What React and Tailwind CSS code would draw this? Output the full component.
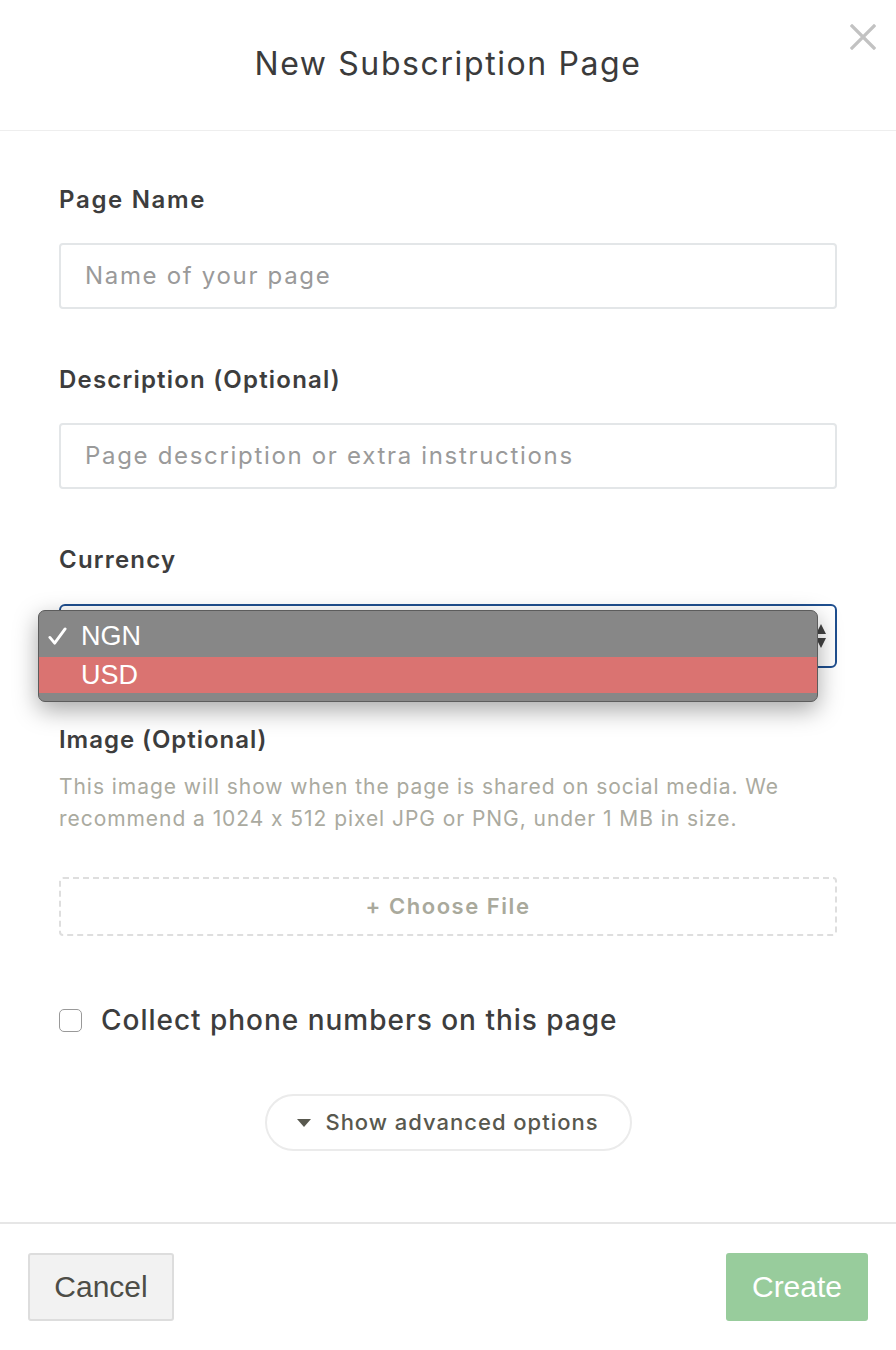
import React from "react";

export default function App() {
  const font = { fontFamily: "Inter, 'Noto Sans', sans-serif" };
  return (
    <div className="w-[896px] h-[1350px] bg-white flex flex-col text-[#3d3d3d]" style={font}>
      <div className="h-[131px] border-b border-[#eeeeee] flex items-center justify-center relative shrink-0">
        <h1 className="text-[32px] font-normal tracking-[0.05em] text-[#3b3b3b] -mt-[2px]">New Subscription Page</h1>
        <button className="absolute right-[20px] top-[24px] w-[26px] h-[26px] text-[#c2c2c2]">
          <svg viewBox="0 0 26 26" className="w-[26px] h-[26px]" fill="none" stroke="currentColor" strokeWidth="3.2" strokeLinecap="square">
            <path d="M2 2 L24 24 M24 2 L2 24" />
          </svg>
        </button>
      </div>

      <div className="flex-1 flex flex-col px-[59px] pt-[55px]">
        <label className="text-[24px] leading-[28px] font-semibold tracking-[0.07em] text-[#3d3d3d]">Page Name</label>
        <div className="mt-[29px] h-[66px] w-[778px] border-2 border-[#e3e6e8] rounded-[4px] flex items-center px-[24px]">
          <span className="text-[24px] tracking-[0.07em] text-[#9a9a9a]">Name of your page</span>
        </div>

        <label className="mt-[57px] text-[24px] leading-[28px] font-semibold tracking-[0.05em] text-[#3d3d3d]">Description (Optional)</label>
        <div className="mt-[29px] h-[66px] w-[778px] border-2 border-[#e3e6e8] rounded-[4px] flex items-center px-[24px]">
          <span className="text-[24px] tracking-[0.07em] text-[#9a9a9a]">Page description or extra instructions</span>
        </div>

        <label className="mt-[57px] text-[24px] leading-[28px] font-semibold tracking-[0.05em] text-[#3d3d3d]">Currency</label>
        <div className="mt-[30px] relative h-[64px] w-[778px]">
          <div className="h-[64px] w-[778px] border-2 border-[#1f4f8f] rounded-[6px] flex items-center justify-end pr-[8px]">
            <svg viewBox="0 0 12 26" className="w-[12px] h-[26px] text-[#444]" fill="currentColor">
              <path d="M6 1 L11 11 L1 11 Z M1 15 L11 15 L6 25 Z" />
            </svg>
          </div>
          <div className="absolute left-[-21px] top-[6px] w-[780px] h-[92px] bg-[#878787] rounded-[7px] border border-[#5c5c5c] shadow-[0_8px_24px_rgba(0,0,0,0.35)] overflow-hidden flex flex-col" style={{ fontFamily: "'Liberation Sans', Arial, sans-serif" }}>
            <div className="h-[46px] flex items-center text-white text-[27px] pt-[4px]">
              <span className="w-[42px] pl-[9px] flex items-center">
                <svg viewBox="0 0 20 20" className="w-[19px] h-[19px]" fill="none" stroke="white" strokeWidth="3" strokeLinecap="round" strokeLinejoin="round">
                  <path d="M2 11 L7 17 L18 2" />
                </svg>
              </span>
              <span>NGN</span>
            </div>
            <div className="h-[36px] bg-[#da7371] flex items-center text-white text-[27px]">
              <span className="w-[42px]"></span>
              <span>USD</span>
            </div>
          </div>
        </div>

        <label className="mt-[58px] text-[24px] leading-[28px] font-semibold tracking-[0.04em] text-[#3d3d3d]">Image (Optional)</label>
        <p className="mt-[17px] text-[21px] leading-[32px] tracking-[0.045em] text-[#aaaaa0] w-[780px]">
          This image will show when the page is shared on social media. We recommend a 1024 x 512 pixel JPG or PNG, under 1 MB in size.
        </p>
        <div className="mt-[42px] h-[59px] w-[778px] border-2 border-dashed border-[#dedede] rounded-[4px] flex items-center justify-center">
          <span className="text-[22px] font-semibold tracking-[0.07em] text-[#a9a99c]">+ Choose File</span>
        </div>

        <div className="mt-[63px] flex items-center">
          <span className="w-[23px] h-[23px] border border-[#999] rounded-[5px] bg-white shrink-0"></span>
          <span className="ml-[19px] text-[28px] font-medium tracking-[0.035em] text-[#3d3d3d]">Collect phone numbers on this page</span>
        </div>

        <div className="mt-[53px] flex justify-center">
          <button className="w-[367px] h-[57px] rounded-full border-2 border-[#ebebeb] flex items-center justify-center gap-[14px] text-[#58584e]">
            <svg viewBox="0 0 14 8" className="w-[14px] h-[8px]" fill="currentColor">
              <path d="M0 0 L14 0 L7 8 Z" />
            </svg>
            <span className="text-[22px] font-medium tracking-[0.045em]">Show advanced options</span>
          </button>
        </div>
      </div>

      <div className="h-[128px] border-t-2 border-[#e6e6e6] flex items-start justify-between px-[28px] pt-[29px] shrink-0" style={{ fontFamily: "'Liberation Sans', Arial, sans-serif" }}>
        <button className="w-[146px] h-[68px] bg-[#f2f2f2] border-2 border-[#dddddd] rounded-[3px] text-[30px] text-[#4d4d47] pb-[2px]">Cancel</button>
        <button className="w-[142px] h-[68px] bg-[#98cc9c] rounded-[3px] text-[30px] text-white pb-[2px]">Create</button>
      </div>
    </div>
  );
}
